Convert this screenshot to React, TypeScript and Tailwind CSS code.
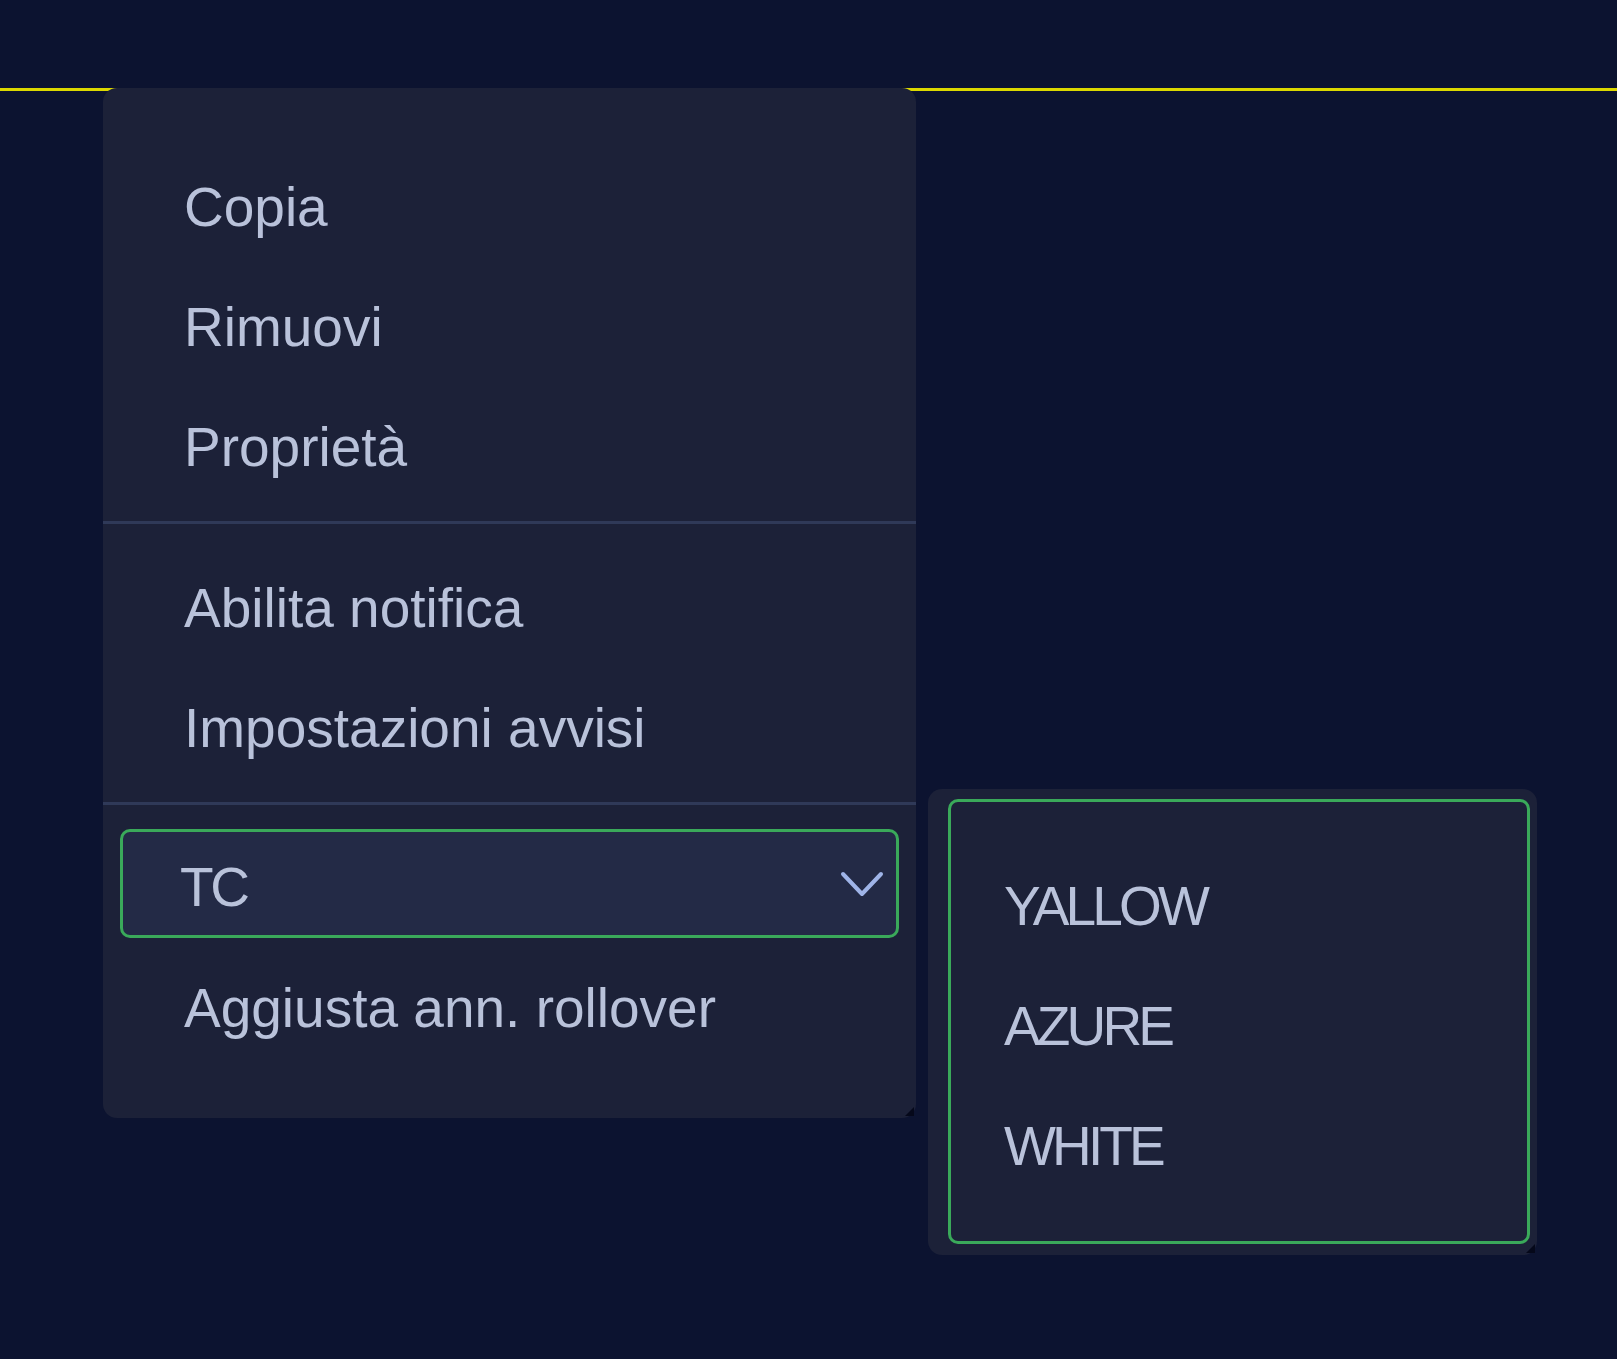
const groups = [
  ['Copia', 'Rimuovi', 'Proprietà'],
  ['Abilita notifica', 'Impostazioni avvisi'],
];

const colors = ['YALLOW', 'AZURE', 'WHITE'];

function Grip() {
  return (
    <svg
      className="absolute right-[2px] bottom-[2px]"
      width="9"
      height="9"
      viewBox="0 0 9 9"
    >
      <polygon points="9,0 9,9 0,9" fill="#05081a" />
    </svg>
  );
}

function Chevron() {
  return (
    <svg width="44" height="28" viewBox="0 0 44 28" fill="none">
      <path
        d="M3 4 L22 24 L41 4"
        stroke="#9fb4e8"
        strokeWidth="4"
        strokeLinecap="round"
        strokeLinejoin="round"
      />
    </svg>
  );
}

export default function App() {
  return (
    <div className="relative min-h-screen bg-[#0c1330] font-['Liberation_Sans',Arial,sans-serif] text-[55px] text-[#b9c2da] overflow-hidden">
      {/* yellow guide line, sits under the menus */}
      <div className="absolute inset-x-0 top-[88px] h-[3px] bg-[#dcd800]" />

      <div className="relative flex items-start gap-[12px] pt-[88px] pl-[103px]">
        {/* context menu */}
        <div className="relative w-[813px] rounded-[14px] bg-[#1c2138] pt-[35px] pb-[50px]">
          {groups.map((items, gi) => (
            <div key={gi}>
              <div className="flex flex-col pt-[24px] pb-[14px]">
                {items.map((label) => (
                  <div key={label} className="pl-[81px] leading-[120px] whitespace-nowrap">
                    {label}
                  </div>
                ))}
              </div>
              <div className="h-[3px] bg-[#2f3958]" />
            </div>
          ))}

          <div className="pt-[24px] px-[17px]">
            <div className="flex h-[109px] items-center justify-between rounded-[10px] border-[3px] border-[#3aa95a] bg-[#232a46] pl-[57px] pr-[12px]">
              <span className="mt-[8px] leading-none tracking-[-0.06em]">TC</span>
              <Chevron />
            </div>
          </div>

          <div className="mt-[10px] pl-[81px] leading-[120px] whitespace-nowrap">
            Aggiusta ann. rollover
          </div>
          <Grip />
        </div>

        {/* submenu */}
        <div className="relative mt-[701px] rounded-[14px] bg-[#1c2138] pl-[20px] pt-[10px] pr-[7px] pb-[11px]">
          <div className="flex w-[582px] flex-col rounded-[10px] border-[3px] border-[#3aa95a] pl-[53px] pt-[44px] pb-[35px]">
            {colors.map((c) => (
              <div key={c} className="leading-[120px] tracking-[-0.07em]">
                {c}
              </div>
            ))}
          </div>
          <Grip />
        </div>
      </div>
    </div>
  );
}
